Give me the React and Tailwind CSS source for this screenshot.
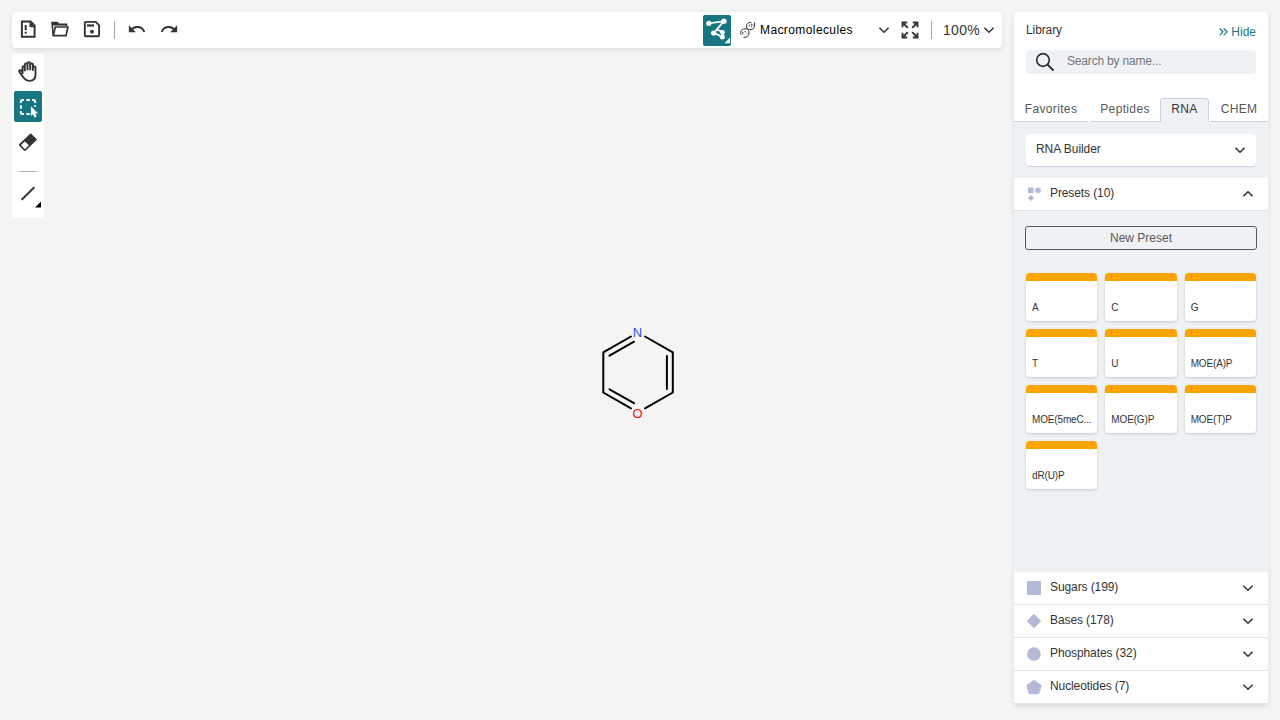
import React from "react";

function Svg({ w = 24, h = 24, className = "", children }) {
  return (
    <svg width={w} height={h} viewBox={`0 0 ${w} ${h}`} fill="none" stroke="#333" strokeWidth="2" className={`block shrink-0 ${className}`}>
      {children}
    </svg>
  );
}

const NewIcon = () => (
  <Svg>
    <path d="M5.900 4.600h8.700l4 4v11.200H5.900z" />
    <path d="M13.500 4.500v5.700h5.500z" fill="#333" stroke="none" />
    <path d="M9.700 7.900v5.400M9.700 14.800v2" />
  </Svg>
);
const OpenIcon = () => (
  <Svg>
    <path d="M5.100 18.500 4.100 5.600h5l1.800 1.800h7.600v2" strokeWidth="1.600" />
    <path d="M3.700 4.900h5.500l2 2H19v1.700H4z" fill="#333" stroke="none" />
    <path d="M7.200 10h12.700l-1.800 8.700H5.400z" strokeWidth="1.700" strokeLinejoin="round" />
  </Svg>
);
const SaveIcon = () => (
  <Svg>
    <path d="M5.800 4.900h9.900l3.400 3.400v9.900a1 1 0 0 1-1 1H5.800a1 1 0 0 1-1-1V5.900a1 1 0 0 1 1-1z" strokeWidth="1.900" />
    <path d="M7 8.500h7" strokeWidth="2.200" />
    <circle cx="12" cy="14.700" r="1.900" fill="#333" stroke="none" />
  </Svg>
);
const UndoIcon = ({ flip }) => (
  <Svg className={flip ? "-scale-x-100" : ""}>
    <path d="M3.900 8.300v7h7z" fill="#333" stroke="none" />
    <path d="M6.200 13c3.500-4.600 11-4 13.100 2" />
  </Svg>
);
const HandIcon = () => (
  <Svg>
    <path d="M5.900 14.800V7.900c0-1.500 2.300-1.500 2.300 0V12M8.200 11V5.200c0-1.500 2.700-1.500 2.700 0V11M10.900 10V4c0-1.500 2.700-1.500 2.700 0v7M13.600 10V5.200c0-1.500 2.700-1.500 2.700 0V11.500M16.300 10V8.300c0-1.500 2.600-1.500 2.600 0V15.300c0 4.200-2.400 6.300-5.800 6.300-3.100 0-4.900-1.300-6.500-3.800L2.600 12.400c-.5-1.200.8-1.900 1.800-1.200l2 2.200" transform="translate(.6 .3)" strokeWidth="1.900" strokeLinejoin="round" />
  </Svg>
);
const SelectIcon = () => (
  <Svg>
    <g stroke="#fff">
      <path d="M4.900 8V6.400a1.500 1.500 0 0 1 1.500-1.500H8M10.400 4.900h3.400M16 4.900h1.600a1.500 1.500 0 0 1 1.500 1.500V8M19.100 10.200v1.500M4.900 10.200v3.500M4.900 16v1.600a1.500 1.500 0 0 0 1.500 1.500H8M10.400 19.100h3.400" />
      <path d="M14.900 11.300v9.800l2.200-1.800 1.600 3.300 2-1-1.600-3.200h2.900z" fill="#fff" stroke="none" />
    </g>
  </Svg>
);
const EraserIcon = () => (
  <Svg>
    <path d="M14.700 3.300 21.100 9.600 9.800 20.500Q8.900 21.300 8 20.500L3.300 15.800Q2.500 14.900 3.300 14.100Z" fill="#333" stroke="none" />
    <path d="M8.900 11.400l4 3.900-4 4L5 15z" fill="#fff" stroke="none" />
  </Svg>
);
const Chevron = ({ up }) => (
  <Svg w={16} h={16} className={up ? "-scale-y-100" : ""}>
    <path d="m3.400 5.700 4.600 4.600 4.600-4.600" strokeWidth="1.500" />
  </Svg>
);
const LayoutIcon = () => (
  <Svg w={28} h={31}>
    <g stroke="#fff" fill="#fff">
      <path d="M6 8.300 20.800 6.200 11 17.900l8.500 4.200.2-5-6-2.700" fill="none" strokeWidth="1.800" />
      <circle cx="5.800" cy="8.300" r="2.600" stroke="none" />
      <circle cx="21" cy="6.200" r="2.600" stroke="none" />
      <circle cx="10.600" cy="18" r="2.600" stroke="none" />
      <circle cx="19.500" cy="17.400" r="2.300" stroke="none" />
      <circle cx="19.300" cy="22" r="2.500" stroke="none" />
      <path d="M27 22.500v5.700h-5.500z" stroke="none" />
    </g>
  </Svg>
);
const HelixIcon = () => (
  <Svg w={16} h={18}>
    <g stroke="#333" strokeWidth="1">
      <path d="M.8 13.500V11.500C.8 8.800 2.800 7.800 5.500 7.800c3 0 3.500 1 5.500 .8 2.500-.3 3.500-2 3.500-4.500V1.500" />
      <path d="M3.500 16.500c3.500.3 5.500-1.800 5.500-4.500 0-1.800-.5-3-1.500-4.200C5.500 5.500 6.500 2 9.500 1.500h1.800" />
      <path d="M2.800 11v3M4.800 10l2 2.500M9.300 3.800v2.400M11.300 2.800v3.400M13 3.500v1" strokeDasharray="1.600 .8" />
    </g>
  </Svg>
);
const ExpandIcon = () => (
  <Svg>
    <path d="M4.500 9.200V4.500h4.700M4.500 4.500l5.300 5.300M14.800 4.500h4.700v4.700M19.500 4.500l-5.300 5.300M4.500 14.800v4.700h4.700M4.500 19.500l5.300-5.300M14.800 19.500h4.700v-4.700M19.500 19.500l-5.300-5.300" strokeWidth="1.900" />
  </Svg>
);

function TopBar() {
  return (
    <header className="flex h-9 w-[990px] items-center rounded bg-white px-1 shadow-[0_2px_5px_rgba(103,104,132,0.15)]">
      <div className="flex h-9 items-start gap-2 pt-[5px]">
        <NewIcon /><OpenIcon /><SaveIcon />
      </div>
      <div className="ml-[10px] h-[18px] w-px bg-[#aaa]" />
      <div className="ml-[10px] flex h-9 items-start gap-2 pt-[5px]">
        <UndoIcon /><UndoIcon flip />
      </div>
      <div className="ml-auto flex h-9 items-center">
        <div className="h-[31px] w-7 rounded-[2px] bg-[#167782]"><LayoutIcon /></div>
        <div className="ml-[9px] flex w-[152px] items-center">
          <HelixIcon />
          <span className="ml-1 text-[12px] tracking-[0.4px] text-black">Macromolecules</span>
          <div className="ml-auto"><Chevron /></div>
        </div>
        <div className="ml-[6px]"><ExpandIcon /></div>
        <div className="ml-[9px] h-[18px] w-px bg-[#aaa]" />
        <span className="ml-[11px] w-[38px] text-[14px] leading-5 tracking-[0.3px] text-[#333]">100%</span>
        <div className="mr-px"><Chevron /></div>
      </div>
    </header>
  );
}

function ToolBar() {
  return (
    <aside className="flex h-[164px] w-8 flex-col items-center rounded bg-white">
      <div className="mt-[5px]"><HandIcon /></div>
      <div className="mt-2 flex h-[31px] w-7 items-center justify-center rounded-[2px] bg-[#167782]"><SelectIcon /></div>
      <div className="mt-2"><EraserIcon /></div>
      <div className="mt-[17px] h-px w-[18px] bg-[#aaa]" />
      <div className="mt-2">
        <Svg w={28} h={28}>
          <path d="M8.200 19.200 19.800 7.800" strokeLinecap="round" strokeWidth="2" />
          <path d="M27 21.500v6h-6z" fill="#000" stroke="none" />
        </Svg>
      </div>
    </aside>
  );
}

function Molecule() {
  return (
    <svg className="absolute left-[590px] top-[315px]" width="100" height="110" viewBox="590 315 100 110" stroke="#000" strokeWidth="2" strokeLinecap="round" fill="none">
      <path d="M631 336.500 603.300 352.300V392.500L631 408.300M645 336.500 672.800 352.300V392.500L645 408.300M609.500 355.700 634 341.700M609.500 389.300 634 403.200M666.900 356V389" />
      <text x="637.500" y="337.200" textAnchor="middle" fontSize="13" fill="#304ff7" stroke="none">N</text>
      <text x="637.500" y="418.200" textAnchor="middle" fontSize="13" fill="#ff0d0d" stroke="none">O</text>
    </svg>
  );
}

const shapes = {
  presets: <><path d="M2 1.500h5.500V7H2zM5 9 8.200 12 5 15.100 1.800 12z" /><circle cx="12" cy="4.300" r="2.800" /></>,
  sugar: <path d="M1 1h14v14H1z" />,
  base: <path d="M8 .8 15.200 8 8 15.200.8 8z" />,
  phosphate: <circle cx="8" cy="8" r="6.800" />,
  nucleotide: <path d="M8 .8 15.800 6.400 13 15.200H3L.2 6.400z" />,
};

function Section({ shape, label, open }) {
  return (
    <div className="flex h-[33px] shrink-0 items-center border-b border-[#e1e5ea] bg-white pr-3 pl-3">
      <svg width="16" height="16" viewBox="0 0 16 16" fill="#b4b9d6">{shapes[shape]}</svg>
      <span className="ml-2 -mt-[3px] text-[12px] leading-4 tracking-[-0.1px] text-[#333]">{label}</span>
      <div className="ml-auto"><Chevron up={open} /></div>
    </div>
  );
}

const presets = ["A", "C", "G", "T", "U", "MOE(A)P", "MOE(5meC...", "MOE(G)P", "MOE(T)P", "dR(U)P"];

function Library() {
  return (
    <section className="flex h-[692px] w-[254px] flex-col rounded-t bg-white shadow-[0_2px_5px_rgba(103,104,132,0.18)]">
      <div className="flex h-[38px] shrink-0 items-start justify-between px-3 text-[12px] leading-4 text-[#333]">
        <span className="pt-[10px] tracking-[-0.1px]">Library</span>
        <span className="flex items-center gap-[3px] pt-3 text-[#167782]">
          <Svg w={9} h={10}><path d="m.7 1.500 3.300 3.300-3.300 3.300M4.700 1.500 8 4.800 4.700 8.100" stroke="#167782" strokeWidth="1.200" /></Svg>
          Hide
        </span>
      </div>
      <div className="mx-3 flex h-6 shrink-0 items-center rounded bg-[#eff2f5]">
        <Svg w={20} h={20} className="ml-[9px]">
          <circle cx="8" cy="8" r="6.300" strokeWidth="1.700" /><path d="m12.500 12.500 6 6" />
        </Svg>
        <span className="ml-3 -mt-[2px] text-[12px] leading-4 tracking-[-0.18px] text-[#757575]">Search by name...</span>
      </div>
      <nav className="mt-6 flex h-6 shrink-0 gap-[2px] text-[12px] leading-[22px] tracking-[0.35px] text-[#585858]">
        <div className="w-[74px] border-b border-[#cad3dd] text-center">Favorites</div>
        <div className="w-[70px] border-b border-[#cad3dd] text-center">Peptides</div>
        <div className="-ml-[2px] w-[49px] rounded-t border border-b-0 border-[#cad3dd] bg-[#eff2f5] text-center leading-[21px] text-[#333]">RNA</div>
        <div className="-ml-px flex-1 border-b border-[#cad3dd] text-center">CHEM</div>
      </nav>
      <div className="flex min-h-0 flex-1 flex-col bg-[#eff2f5]">
        <div className="mx-3 mt-3 mb-3 flex h-8 shrink-0 items-center justify-between rounded bg-white pr-2 pl-[10px] text-[12px] text-[#333] shadow-[0_1px_1px_rgba(103,104,132,0.25)]">
          <span className="-mt-[2px] tracking-[-0.05px]">RNA Builder</span><Chevron />
        </div>
        <Section shape="presets" label="Presets (10)" open />
        <button className="mx-[11px] mt-[15px] h-6 shrink-0 rounded-[3px] border border-[#585858] text-[12px] leading-[22px] text-[#585858]">New Preset</button>
        <div className="mx-3 mt-[23px] grid grid-cols-3 gap-2">
          {presets.map((name) => (
            <div key={name} className="flex h-12 min-w-0 flex-col justify-end overflow-hidden rounded border-t-8 border-[#faa500] bg-white pb-[6px] pl-[6px] text-[10px] leading-[14px] tracking-[-0.15px] text-[#333] shadow-[0_1px_3px_rgba(103,104,132,0.3)]">
              {name}
            </div>
          ))}
        </div>
        <div className="mt-auto">
          <Section shape="sugar" label="Sugars (199)" />
          <Section shape="base" label="Bases (178)" />
          <Section shape="phosphate" label="Phosphates (32)" />
          <Section shape="nucleotide" label="Nucleotides (7)" />
        </div>
      </div>
    </section>
  );
}

export default function App() {
  return (
    <div className="relative flex h-[720px] w-[1280px] gap-3 overflow-hidden bg-[#f4f4f4] p-3 font-['Liberation_Sans',Arial,sans-serif]">
      <main className="flex flex-col gap-[6px]">
        <TopBar />
        <ToolBar />
      </main>
      <Library />
      <Molecule />
    </div>
  );
}
